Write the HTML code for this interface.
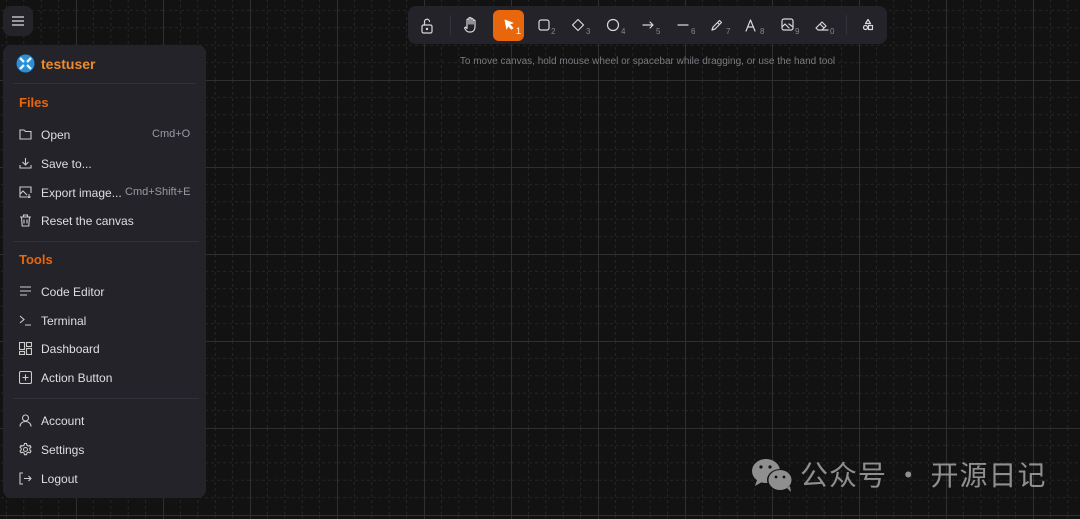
<!DOCTYPE html>
<html><head><meta charset="utf-8"><style>
*{margin:0;padding:0;box-sizing:border-box}
body{width:1080px;height:519px;overflow:hidden;background:#121212;font-family:"Liberation Sans","Noto Sans CJK SC",sans-serif;position:relative}
.abs{position:absolute}
.panel{background:#232329;border-radius:8px}
.mi{position:absolute;left:41px;font-size:12px;color:#dedee3;line-height:14px;margin-top:1px}
.ic{position:absolute;left:19px}
.hd{position:absolute;left:19px;font-size:13px;font-weight:bold;color:#e8670c}
.sep{position:absolute;left:10px;right:10px;height:1px;background:#303038}
</style></head><body>
<svg class="abs" style="left:0;top:0" width="1080" height="519">
<defs>
<pattern id="g" x="76" y="80" width="87" height="87" patternUnits="userSpaceOnUse">
<g stroke="#252525" stroke-width="1" stroke-dasharray="3 3">
<line x1="17.4" y1="0" x2="17.4" y2="87"/><line x1="34.8" y1="0" x2="34.8" y2="87"/><line x1="52.2" y1="0" x2="52.2" y2="87"/><line x1="69.6" y1="0" x2="69.6" y2="87"/>
<line y1="17.4" x1="0" y2="17.4" x2="87"/><line y1="34.8" x1="0" y2="34.8" x2="87"/><line y1="52.2" x1="0" y2="52.2" x2="87"/><line y1="69.6" x1="0" y2="69.6" x2="87"/>
</g>
<line x1="0.5" y1="0" x2="0.5" y2="87" stroke="#2f2f2f"/><line x1="0" y1="0.5" x2="87" y2="0.5" stroke="#2f2f2f"/>
</pattern></defs>
<rect width="1080" height="519" fill="url(#g)"/>
</svg>

<div class="abs panel" style="left:3px;top:6px;width:30px;height:30px">
<svg class="abs" style="left:9px;top:10px" width="12" height="10" stroke="#ddd" stroke-width="1.2"><path d="M0 1h12M0 5h12M0 9h12"/></svg></div>

<div class="abs panel" style="left:3px;top:45px;width:203px;height:453px">
<svg class="abs" style="left:13px;top:9px" width="19" height="19"><circle cx="9.5" cy="9.5" r="9" fill="#2b8fd6"/><path d="M4 4l4 4M15 4l-4 4M4 15l4-4M15 15l-4-4" stroke="#e8f4ff" stroke-width="2.4"/></svg>
<div class="abs" style="left:38px;top:11px;font-size:14px;font-weight:bold;color:#f08a2c">testuser</div>
<div class="sep" style="top:38px"></div>
</div>
<div class="hd" style="top:95px">Files</div>
<svg class="ic" style="top:128px" width="13" height="12" fill="none" stroke="#ccc" stroke-width="1.1"><path d="M1 2h4l1.5 1.5H12V11H1z"/></svg><div class="mi" style="top:127px">Open</div>
<div class="abs" style="left:152px;top:128px;font-size:11px;color:#9a9aa2">Cmd+O</div>
<svg class="ic" style="top:157px" width="13" height="12" fill="none" stroke="#ccc" stroke-width="1.1"><path d="M6.5 1v7M3.5 5l3 3 3-3M1 8v3h11V8"/></svg><div class="mi" style="top:156px">Save to...</div>
<svg class="ic" style="top:186px" width="13" height="12" fill="none" stroke="#ccc" stroke-width="1.1"><path d="M8 11H1V1h11v6M1 8l3-3 4 4M10 8v4M8.5 10.5l1.5 1.5 1.5-1.5"/></svg><div class="mi" style="top:185px">Export image...</div>
<div class="abs" style="left:125px;top:186px;font-size:11px;color:#9a9aa2">Cmd+Shift+E</div>
<svg class="ic" style="top:214px" width="13" height="13" fill="none" stroke="#ccc" stroke-width="1.1"><path d="M1 3h11M4.5 3V1h4v2M2.5 3l.7 9h6.6l.7-9M5 5.5v4M8 5.5v4"/></svg><div class="mi" style="top:213px">Reset the canvas</div>
<div class="abs" style="left:13px;top:241px;width:186px;height:1px;background:#303038"></div>
<div class="hd" style="top:252px">Tools</div>
<svg class="ic" style="top:286px" width="13" height="11" stroke="#ccc" stroke-width="1.1"><path d="M1 1h11M1 5h11M1 9h7"/></svg><div class="mi" style="top:284px">Code Editor</div>
<svg class="ic" style="top:314px" width="13" height="12" fill="none" stroke="#ccc" stroke-width="1.1"><path d="M1 2l4 3.5L1 9M6 11h6"/></svg><div class="mi" style="top:313px">Terminal</div>
<svg class="ic" style="top:342px" width="13" height="13" fill="none" stroke="#ccc" stroke-width="1.1"><rect x=".5" y=".5" width="5" height="7"/><rect x="7.5" y=".5" width="5" height="4"/><rect x=".5" y="9.5" width="5" height="3"/><rect x="7.5" y="6.5" width="5" height="6"/></svg><div class="mi" style="top:341px">Dashboard</div>
<svg class="ic" style="top:371px" width="13" height="13" fill="none" stroke="#ccc" stroke-width="1.1"><rect x=".5" y=".5" width="12" height="12" rx="1.5"/><path d="M6.5 3.5v6M3.5 6.5h6"/></svg><div class="mi" style="top:370px">Action Button</div>
<div class="abs" style="left:13px;top:398px;width:186px;height:1px;background:#303038"></div>
<svg class="ic" style="top:414px" width="13" height="13" fill="none" stroke="#ccc" stroke-width="1.1"><circle cx="6.5" cy="4" r="3"/><path d="M1 12.5c0-3 2.5-5 5.5-5s5.5 2 5.5 5"/></svg><div class="mi" style="top:413px">Account</div>
<svg class="ic" style="top:443px" width="13" height="13" fill="none" stroke="#ccc" stroke-width="1.1"><circle cx="6.5" cy="6.5" r="2"/><path d="M5.5.5h2l.4 1.7 1.5.8 1.6-.6 1 1.7-1.2 1.2v1.6l1.2 1.2-1 1.7-1.6-.6-1.5.8-.4 1.7h-2l-.4-1.7-1.5-.8-1.6.6-1-1.7 1.2-1.2V5.3L1 4.1l1-1.7 1.6.6 1.5-.8z"/></svg><div class="mi" style="top:442px">Settings</div>
<svg class="ic" style="top:472px" width="13" height="13" fill="none" stroke="#ccc" stroke-width="1.1"><path d="M4 1H1v11h3M5 6.5h7M9.5 4l2.5 2.5L9.5 9"/></svg><div class="mi" style="top:471px">Logout</div>

<div class="abs panel" style="left:408px;top:6px;width:479px;height:38px"></div>
<div class="abs" style="left:450px;top:15px;width:1px;height:20px;background:#33333b"></div>
<div class="abs" style="left:846px;top:15px;width:1px;height:20px;background:#33333b"></div>
<div class="abs" style="left:493px;top:10px;width:31px;height:31px;border-radius:6px;background:#e8670c"></div>
<svg class="abs" style="left:408px;top:6px" width="479" height="38" fill="none" stroke="#d8d8dc" stroke-width="1.2" stroke-linecap="round" stroke-linejoin="round">
<rect x="14" y="19" width="10" height="8" rx="1.5"/><path d="M16.5 19v-3a2.5 2.5 0 0 1 5-.5"/><circle cx="19" cy="23" r=".6"/>
<path d="M61 26c-2 0-3.5-2-4.5-4l1-1 1.5 1.5V14a1 1 0 0 1 2 0v4-5.5a1 1 0 0 1 2 0V18v-4.5a1 1 0 0 1 2 0V18v-3a1 1 0 0 1 2 0v6c0 3-2 5-4 5z"/>
<path d="M97 14l8 3-3.5 1.2L105 22l-1.5 1.2-3.5-3.5-1.3 3.3z" fill="#fff" stroke="#fff" stroke-width=".8"/>
<rect x="131" y="14" width="10" height="10" rx="2"/>
<path d="M170 13.5l5.5 5.5-5.5 5.5-5.5-5.5z"/>
<circle cx="205" cy="19" r="5.5"/>
<path d="M235 19h10M242 16l3 3-3 3"/>
<path d="M270 19h10"/>
<path d="M304 24l1-3 6.5-6.5 2 2-6.5 6.5zM309.5 16.5l2 2"/>
<path d="M338 25l4.5-11 4.5 11M340 21h5"/>
<rect x="374" y="13" width="11" height="11" rx="2"/><path d="M374 21l3-3 4 4M381 18l4 3"/>
<path d="M410 24l-2-2 6-6 4 4-4 4zM413 24h7M412 18l4 4"/>
<path d="M460 13.5l2.5 4h-5z"/><circle cx="457.5" cy="21.5" r="2"/><rect x="460.5" y="19.5" width="4" height="4"/>
</svg>
<div class="abs" style="left:516px;top:26px;font-size:9px;color:#fff">1</div>
<div class="abs" style="left:551px;top:27px;font-size:8px;color:#888">2</div>
<div class="abs" style="left:586px;top:27px;font-size:8px;color:#888">3</div>
<div class="abs" style="left:621px;top:27px;font-size:8px;color:#888">4</div>
<div class="abs" style="left:656px;top:27px;font-size:8px;color:#888">5</div>
<div class="abs" style="left:691px;top:27px;font-size:8px;color:#888">6</div>
<div class="abs" style="left:726px;top:27px;font-size:8px;color:#888">7</div>
<div class="abs" style="left:760px;top:27px;font-size:8px;color:#888">8</div>
<div class="abs" style="left:795px;top:27px;font-size:8px;color:#888">9</div>
<div class="abs" style="left:830px;top:27px;font-size:8px;color:#888">0</div>
<div class="abs" style="left:408px;top:56px;width:479px;text-align:center;font-size:10px;color:#7a7a80">To move canvas, hold mouse wheel or spacebar while dragging, or use the hand tool</div>

<svg class="abs" style="left:751px;top:458px" width="45" height="36">
<ellipse cx="15" cy="13" rx="14" ry="12" fill="#8f8f8f"/><path d="M6 22l-2 6 7-4z" fill="#8f8f8f"/>
<ellipse cx="29" cy="22" rx="13" ry="11" fill="#121212"/><ellipse cx="29" cy="22" rx="11.5" ry="10" fill="#8f8f8f"/><path d="M36 30l4 4-1-6z" fill="#8f8f8f"/>
<circle cx="10" cy="9" r="1.6" fill="#121212"/><circle cx="19" cy="9" r="1.6" fill="#121212"/><circle cx="25" cy="19" r="1.4" fill="#121212"/><circle cx="33" cy="19" r="1.4" fill="#121212"/>
</svg>
<div class="abs" style="left:800px;top:456px;font-size:28px;color:#8f8f8f;font-family:'Noto Sans CJK SC',sans-serif;letter-spacing:1px;line-height:36px">公众号 · 开源日记</div>
</body></html>
